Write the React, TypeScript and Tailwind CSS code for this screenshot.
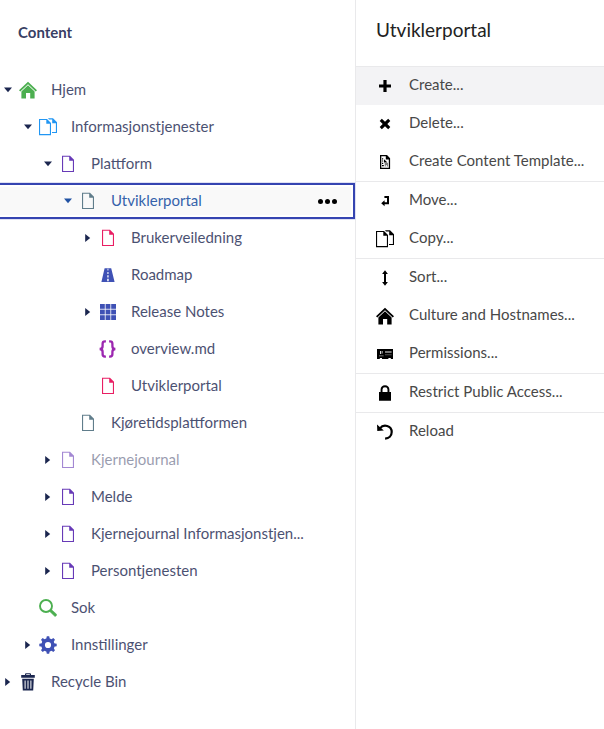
import type { ReactNode } from "react";

type IconProps = { className?: string; children?: ReactNode };

function Glyph({ className = "", children }: IconProps) {
  return (
    <svg
      viewBox="0 0 18 18"
      className={"block h-[18px] w-[18px] shrink-0 " + className}
      fill="currentColor"
      aria-hidden="true"
    >
      {children}
    </svg>
  );
}

const Doc = ({ className }: IconProps) => (
  <Glyph className={className}>
    <path fillRule="evenodd" d="M3 .7H11L15 4.8V17H3ZM4.1 1.8V15.9H13.9V5.8H10.2V1.8Z" />
  </Glyph>
);

const Docs = ({ className }: IconProps) => (
  <Glyph className={className}>
    <path fillRule="evenodd" d="M0 1H8L12 5V17.2H0ZM1.1 2.1V16.1H10.9V5.8H7.3V2.1Z" />
    <path d="M9 .3H14L18 4.3V15H13V13.9H16.9V5.2H13.2V1.4H10Z" />
  </Glyph>
);

const Home = ({ className }: IconProps) => (
  <Glyph className={className}>
    <path d="M9 .8L18 9.3L16.7 10.5L9 3.3L1.3 10.5L0 9.3Z" />
    <path d="M9 4.3L15.6 10.5V17.4H11.2V12H7V17.4H2.4V10.5Z" />
  </Glyph>
);

const Road = ({ className }: IconProps) => (
  <Glyph className={className}>
    <path
      fillRule="evenodd"
      d="M5.6 2.2H12.2L15.6 16H2.4ZM8.5 2.8V4.6H9.4V2.8ZM8.4 6V8H9.5V6ZM8.3 9.3V11.5H9.6V9.3ZM8.2 12.8V15.2H9.7V12.8Z"
    />
  </Glyph>
);

const Grid = ({ className }: IconProps) => (
  <Glyph className={className}>
    {[1, 6.6, 12.2].map((y) =>
      [1, 6.6, 12.2].map((x) => <rect key={`${x}-${y}`} x={x} y={y} width="4.8" height="4.8" />)
    )}
  </Glyph>
);

const Braces = ({ className }: IconProps) => (
  <Glyph className={className}>
    <g fill="none" stroke="currentColor" strokeWidth="2.3">
      <path d="M6.9 1.4H6Q3.6 1.4 3.6 3.7V6.3Q3.6 9 .6 9Q3.6 9 3.6 11.7V14.3Q3.6 16.6 6 16.6H6.9" />
      <path d="M10.1 1.4H11Q13.4 1.4 13.4 3.7V6.3Q13.4 9 16.4 9Q13.4 9 13.4 11.7V14.3Q13.4 16.6 11 16.6H10.1" />
    </g>
  </Glyph>
);

const Search = ({ className }: IconProps) => (
  <Glyph className={className}>
    <circle cx="7" cy="7" r="6" fill="none" stroke="currentColor" strokeWidth="1.9" />
    <path d="M10.8 12.6L12.6 10.8L17.6 15.3Q17.8 17 16 17.6Z" stroke="currentColor" strokeWidth=".5" />
  </Glyph>
);

const Gear = ({ className }: IconProps) => (
  <Glyph className={className}>
    <circle cx="9" cy="9" r="4.9" fill="none" stroke="currentColor" strokeWidth="3.6" />
    {[0, 45, 90, 135, 180, 225, 270, 315].map((a) => (
      <path key={a} transform={`rotate(${a} 9 9)`} d="M7.2 3.2L7.8 .3H10.2L10.8 3.2Z" />
    ))}
  </Glyph>
);

const Trash = ({ className }: IconProps) => (
  <Glyph className={className}>
    <path fillRule="evenodd" d="M2.2 3.2V2H6V1.2Q6 .3 7 .3H11Q12 .3 12 1.2V2H15.8V4.8H2.2ZM7.2 1.3V2H10.8V1.3Z" />
    <path fillRule="evenodd" d="M3.2 5.8H14.8L14.2 17.6H3.8ZM5.6 7.5V15.8H6.6V7.5ZM8.5 7.5V15.8H9.5V7.5ZM11.4 7.5V15.8H12.4V7.5Z" />
  </Glyph>
);

const Plus = () => (
  <Glyph>
    <path d="M7.4 3H10.6V7.4H15V10.6H10.6V15H7.4V10.6H3V7.4H7.4Z" />
  </Glyph>
);

const Cross = () => (
  <Glyph>
    <path d="M5.8 3.8L9 6.8L12.2 3.8L14.3 5.9L11.3 9L14.3 12.1L12.2 14.2L9 11.2L5.8 14.2L3.7 12.1L6.7 9L3.7 5.9Z" />
  </Glyph>
);

const Template = () => (
  <Glyph>
    <path fillRule="evenodd" d="M4 2H11L14.1 5.2V16H4ZM5.3 3.3V14.7H12.8V6.5H9.8V3.3Z" />
    <path d="M6 5.2H7.2V6.4H6ZM6 7.4H7.2V8.6H6ZM8 6.2L11.5 9.5H8ZM6 9.8H7.2V11H6ZM6 12H7.8V13.2H6ZM8.7 10.6H12V11.5H8.7ZM8.7 12.4H9.8V13.3H8.7ZM10.8 12.4H12V13.3H10.8Z" />
  </Glyph>
);

const Move = () => (
  <Glyph>
    <path d="M8.4 4H13V12.2H8.6V14.2L5.2 11.2L8.6 8.2V10.2H11V6H8.4Z" />
  </Glyph>
);

const Sort = () => (
  <Glyph>
    <path d="M9 1.3L11.9 5.1H10V12.9H11.9L9 16.7L6.1 12.9H8V5.1H6.1Z" />
  </Glyph>
);

const Permissions = () => (
  <Glyph>
    <path d="M1 4H17V14H14.8V13H12.4V14H6V13H3.8V14H1Z" />
    <path d="M4 6.1H5.2V9H4Z" fill="#ddd" />
    <path d="M5.8 6H6.8V8.6H5.8ZM3 10.4H7.6V11.2H3Z" fill="#999" />
    <path d="M9 6H15.6V8H9Z" fill="#777" />
    <path d="M9 9.4H15.6V10.2H9Z" fill="#666" />
  </Glyph>
);

const Lock = () => (
  <Glyph>
    <path
      fillRule="evenodd"
      d="M4.6 8V5.6C4.6 2.8 6.4 1.2 9 1.2S13.4 2.8 13.4 5.6V8H15V16.8H3V8ZM6.5 8H11.5V5.6Q11.5 3.2 9 3.2T6.5 5.6Z"
    />
  </Glyph>
);

const Reload = () => (
  <Glyph>
    <path d="M4 5.4C7.5 .7 15.7 2.6 15.7 9.1C15.7 13 12.8 15.5 9.1 15.7" fill="none" stroke="currentColor" strokeWidth="2.2" />
    <path d="M1 1.4L1.3 8.1L7.8 7.4Z" />
  </Glyph>
);

type Row = {
  label: string;
  level: number;
  icon: ReactNode;
  caret?: "down" | "right";
  selected?: boolean;
  dim?: boolean;
};

const rows: Row[] = [
  { label: "Hjem", level: 0, caret: "down", icon: <Home className="text-[#4caf50]" /> },
  { label: "Informasjonstjenester", level: 1, caret: "down", icon: <Docs className="text-[#2196f3]" /> },
  { label: "Plattform", level: 2, caret: "down", icon: <Doc className="text-[#673ab7]" /> },
  { label: "Utviklerportal", level: 3, caret: "down", selected: true, icon: <Doc className="text-[#607d8b]" /> },
  { label: "Brukerveiledning", level: 4, caret: "right", icon: <Doc className="text-[#e91e63]" /> },
  { label: "Roadmap", level: 4, icon: <Road className="text-[#3f51b5]" /> },
  { label: "Release Notes", level: 4, caret: "right", icon: <Grid className="text-[#3f51b5]" /> },
  { label: "overview.md", level: 4, icon: <Braces className="text-[#9c27b0]" /> },
  { label: "Utviklerportal", level: 4, icon: <Doc className="text-[#e91e63]" /> },
  { label: "Kjøretidsplattformen", level: 3, icon: <Doc className="text-[#607d8b]" /> },
  { label: "Kjernejournal", level: 2, caret: "right", dim: true, icon: <Doc className="text-[#673ab7]" /> },
  { label: "Melde", level: 2, caret: "right", icon: <Doc className="text-[#673ab7]" /> },
  { label: "Kjernejournal Informasjonstjen...", level: 2, caret: "right", icon: <Doc className="text-[#673ab7]" /> },
  { label: "Persontjenesten", level: 2, caret: "right", icon: <Doc className="text-[#673ab7]" /> },
  { label: "Sok", level: 1, icon: <Search className="text-[#4caf50]" /> },
  { label: "Innstillinger", level: 1, caret: "right", icon: <Gear className="text-[#3f51b5]" /> },
  { label: "Recycle Bin", level: 0, caret: "right", icon: <Trash className="text-[#1b264f]" /> },
];

const indents = ["pl-[3px]", "pl-[23px]", "pl-[43px]", "pl-[63px]", "pl-[83px]"];

function TreeRow({ row }: { row: Row }) {
  const tone = row.selected ? "text-[#2152a3]" : "text-[#1b264f]";
  return (
    <li
      className={
        "relative flex h-[37px] items-center " +
        indents[row.level] +
        " " +
        tone +
        (row.selected
          ? " bg-[linear-gradient(#f9f9f9,#f9f9f9)] bg-[length:351px_28px] bg-[position:0_5px] bg-no-repeat"
          : "")
      }
    >
      <svg viewBox="0 0 10 10" className="mt-px mr-[6px] block h-[10px] w-[10px] shrink-0" fill="currentColor">
        {row.caret === "down" && <path d="M1 2.4H9L5 7.2Z" />}
        {row.caret === "right" && <path d="M2.2 .9L7.2 5L2.2 9.1Z" />}
      </svg>
      <span className={"mt-px " + (row.dim ? "opacity-60" : "")}>{row.icon}</span>
      <span
        className={
          "-mt-px ml-[14px] whitespace-nowrap text-[15px] leading-5 " +
          (row.dim ? "opacity-45" : row.selected ? "opacity-90" : "opacity-80")
        }
      >
        {row.label}
      </span>
      {row.selected && (
        <>
          <span className="mt-[2px] mr-[18px] ml-auto flex gap-[2px]">
            <i className="h-[5px] w-[5px] rounded-full bg-black" />
            <i className="h-[5px] w-[5px] rounded-full bg-black" />
            <i className="h-[5px] w-[5px] rounded-full bg-black" />
          </span>
          <span className="pointer-events-none absolute top-px right-0 -left-[2px] h-[36px] border-2 border-[#3544b1] shadow-[0_0_0_1px_#dfe1f3]" />
        </>
      )}
    </li>
  );
}

const groups: { label: string; icon: ReactNode; active?: boolean }[][] = [
  [
    { label: "Create...", icon: <Plus />, active: true },
    { label: "Delete...", icon: <Cross /> },
    { label: "Create Content Template...", icon: <Template /> },
  ],
  [
    { label: "Move...", icon: <Move /> },
    { label: "Copy...", icon: <Docs /> },
  ],
  [
    { label: "Sort...", icon: <Sort /> },
    { label: "Culture and Hostnames...", icon: <Home /> },
    { label: "Permissions...", icon: <Permissions /> },
  ],
  [{ label: "Restrict Public Access...", icon: <Lock /> }],
  [{ label: "Reload", icon: <Reload /> }],
];

export default function App() {
  return (
    <div className="flex h-[729px] w-[604px] overflow-hidden bg-white font-['Lato',sans-serif]">
      <nav className="w-[355px] shrink-0">
        <h1 className="flex h-[71px] items-start pt-[22px] pl-[18px] text-[15px] leading-5 font-bold text-[#1b264f]/90">
          Content
        </h1>
        <ul>
          {rows.map((row, i) => (
            <TreeRow key={i} row={row} />
          ))}
        </ul>
      </nav>
      <aside className="flex-1 border-l border-[#e9e9eb]">
        <h2 className="flex h-[66px] items-start pt-[18px] pl-[20px] text-[19px] leading-6 text-[#222]">
          Utviklerportal
        </h2>
        {groups.map((group, i) => (
          <ul key={i} className="border-t border-[#e9e9eb]">
            {group.map((item) => (
              <li
                key={item.label}
                className={"flex h-[38px] items-center pl-[20px] " + (item.active ? "bg-[#f3f3f5]" : "")}
              >
                <span className="text-black">{item.icon}</span>
                <span className="-mt-1 ml-[15px] text-[15px] leading-5 tracking-[0.02px] whitespace-nowrap text-[#484848]">
                  {item.label}
                </span>
              </li>
            ))}
          </ul>
        ))}
      </aside>
    </div>
  );
}
